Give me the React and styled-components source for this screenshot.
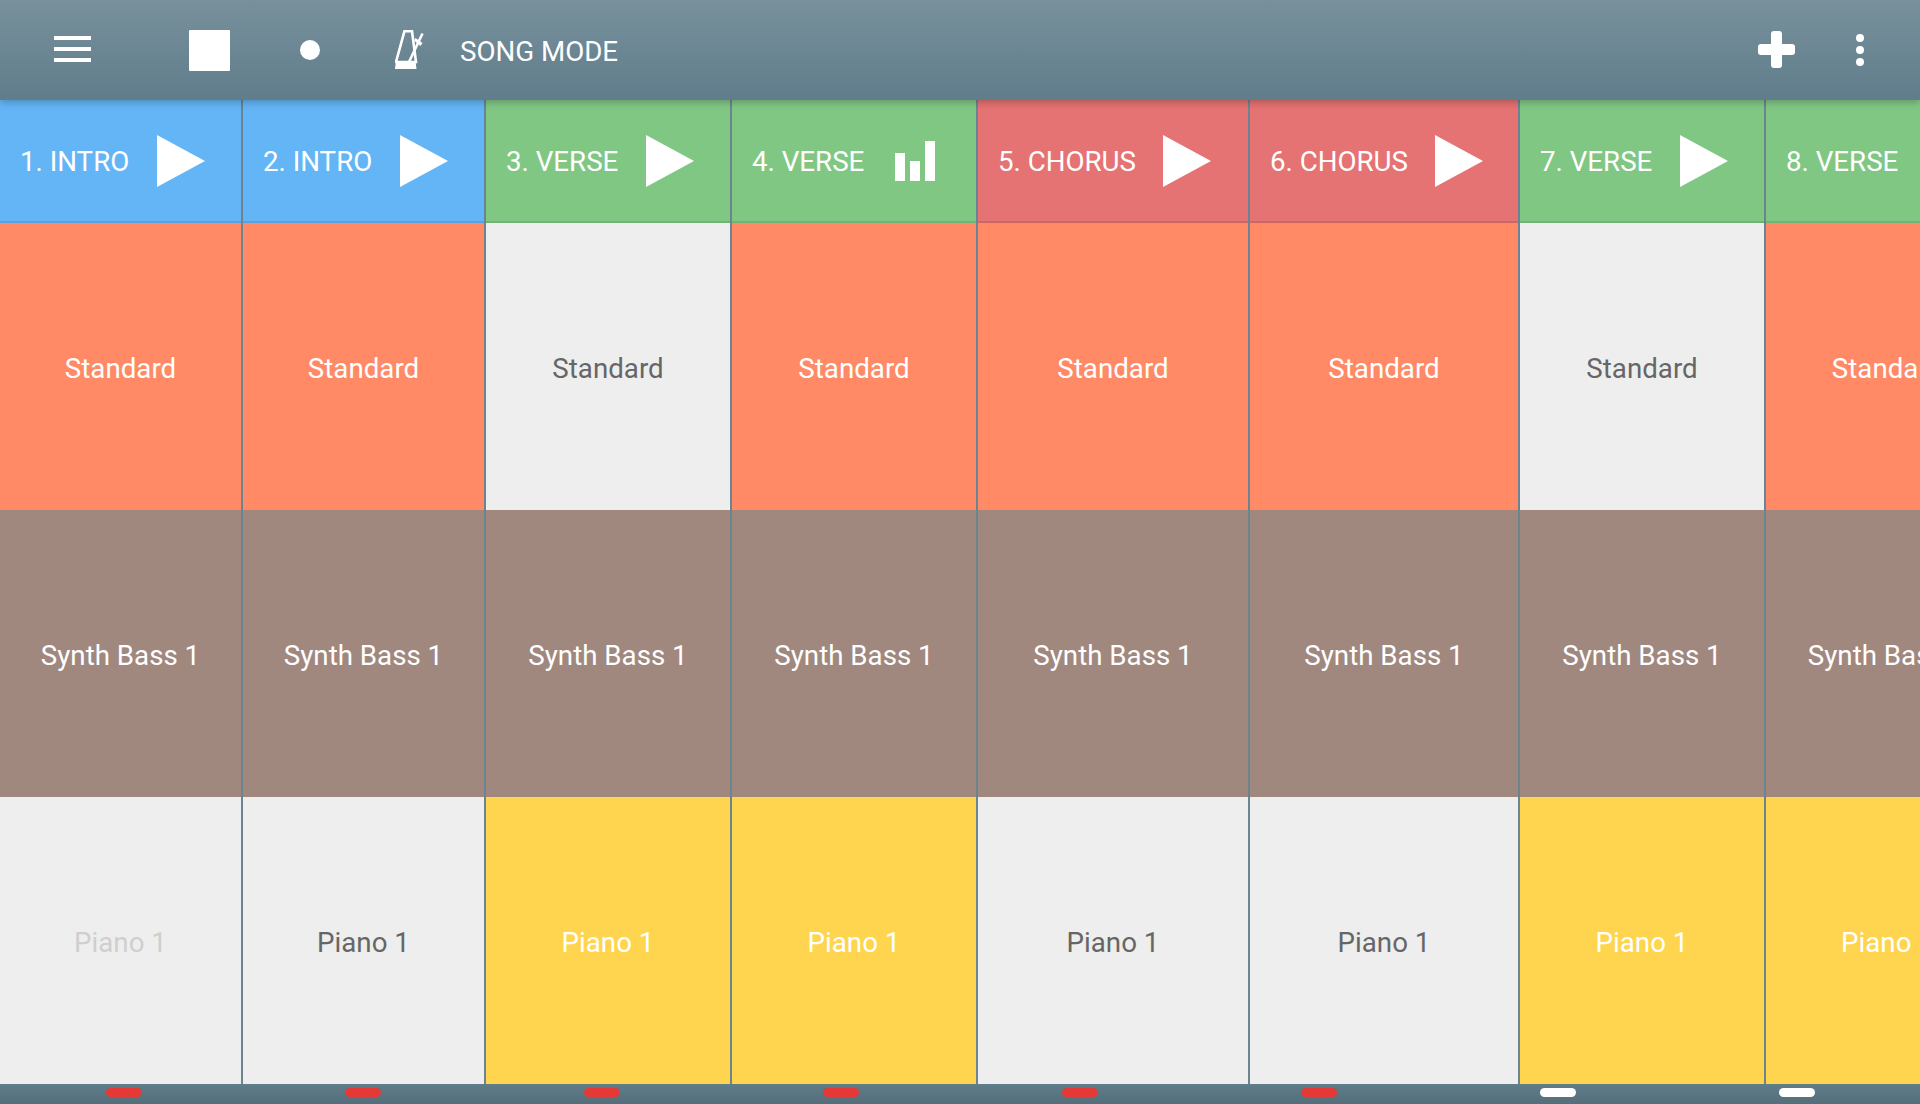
import styled, { createGlobalStyle } from 'styled-components';

const GlobalStyle = createGlobalStyle`
  html, body {
    margin: 0;
    padding: 0;
    background: #607d8b;
  }
`;

const colors = {
  blue: '#64b5f6',
  green: '#81c784',
  red: '#e57373',
  orange: '#ff8a65',
  brown: '#a1887f',
  yellow: '#ffd54f',
  off: '#eeeeee',
};

const Page = styled.div`
  width: 1920px;
  height: 1104px;
  display: flex;
  flex-direction: column;
  overflow: hidden;
  font-family: Roboto, 'Liberation Sans', sans-serif;
`;

const TopBar = styled.header`
  position: relative;
  z-index: 2;
  flex: 0 0 100px;
  display: flex;
  align-items: center;
  background: linear-gradient(#78909c, #607d8b);
  box-shadow: 0 3px 7px rgba(0, 0, 0, 0.22);
  color: #fff;
`;

const MenuIcon = styled.div`
  width: 37px;
  height: 26px;
  margin: 0 0 2px 54px;
  display: flex;
  flex-direction: column;
  justify-content: space-between;

  span {
    height: 4px;
    background: #fff;
  }
`;

const StopIcon = styled.div`
  width: 41px;
  height: 41px;
  margin-left: 98px;
  border-radius: 1px;
  background: #fff;
`;

const RecordIcon = styled.div`
  width: 20px;
  height: 20px;
  margin-left: 70px;
  border-radius: 50%;
  background: #fff;
`;

const MetronomeIcon = styled.svg`
  width: 30px;
  height: 40px;
  margin-left: 75px;
`;

const ModeLabel = styled.div`
  margin-left: 35px;
  margin-top: 3px;
  font-size: 27.7px;
  white-space: nowrap;
`;

const Spacer = styled.div`
  flex: 1;
`;

const PlusIcon = styled.svg`
  width: 37px;
  height: 37px;
  margin: 0 61px 1px 0;
`;

const DotsIcon = styled.div`
  display: flex;
  flex-direction: column;
  gap: 4px;
  margin-right: 56px;

  span {
    width: 8px;
    height: 8px;
    border-radius: 50%;
    background: #fff;
  }
`;

const Board = styled.main`
  flex: 1;
  display: flex;
  min-height: 0;
`;

const Column = styled.section`
  flex: 0 0 ${(p) => p.$width}px;
  box-sizing: border-box;
  display: flex;
  flex-direction: column;
  border-right: 2px solid #6b8492;
`;

const Tab = styled.div`
  flex: 0 0 123px;
  box-sizing: border-box;
  display: flex;
  align-items: center;
  gap: ${(p) => p.$gap}px;
  padding: 1px 0 0 20px;
  background: ${(p) => colors[p.$color]};
  border-bottom: 2px solid rgba(0, 0, 0, 0.1);
  color: #fff;
  font-size: 27.7px;
  white-space: nowrap;
`;

const PlayIcon = styled.svg`
  flex: none;
  width: 48px;
  height: 52px;
`;

const LevelIcon = styled.div`
  flex: none;
  height: 40px;
  display: flex;
  align-items: flex-end;
  gap: 5px;
`;

const LevelBar = styled.span`
  width: 10px;
  height: ${(p) => p.$height}px;
  background: #fff;
`;

const Cell = styled.div`
  flex: 1;
  display: flex;
  align-items: center;
  justify-content: center;
  padding-top: 4px;
  box-sizing: border-box;
  background: ${(p) => colors[p.$color]};
  color: ${(p) => (p.$dim ? '#cfcfcf' : p.$color === 'off' ? '#666666' : '#ffffff')};
  font-size: 27.7px;
  white-space: nowrap;
`;

const BottomBar = styled.footer`
  flex: 0 0 20px;
  box-sizing: border-box;
  display: flex;
  gap: 203px;
  padding: 4px 0 0 106px;
  background: linear-gradient(#607d8b, #546e7a);
`;

const Marker = styled.span`
  flex: none;
  width: 36px;
  height: 9px;
  border-radius: 5px;
  background: ${(p) => (p.$on ? '#ffffff' : '#e53935')};
`;

const columns = [
  { width: 243, name: '1. INTRO', color: 'blue', gap: 28, drums: 'orange', bass: 'brown', piano: 'off', dim: true },
  { width: 243, name: '2. INTRO', color: 'blue', gap: 28, drums: 'orange', bass: 'brown', piano: 'off' },
  { width: 246, name: '3. VERSE', color: 'green', gap: 28, drums: 'off', bass: 'brown', piano: 'yellow' },
  { width: 246, name: '4. VERSE', color: 'green', gap: 31, drums: 'orange', bass: 'brown', piano: 'yellow', playing: true },
  { width: 272, name: '5. CHORUS', color: 'red', gap: 27, drums: 'orange', bass: 'brown', piano: 'off' },
  { width: 270, name: '6. CHORUS', color: 'red', gap: 27, drums: 'orange', bass: 'brown', piano: 'off' },
  { width: 246, name: '7. VERSE', color: 'green', gap: 28, drums: 'off', bass: 'brown', piano: 'yellow' },
  { width: 245, name: '8. VERSE', color: 'green', gap: 28, drums: 'orange', bass: 'brown', piano: 'yellow' },
];

function Play() {
  return (
    <PlayIcon viewBox="0 0 48 52">
      <path d="M0 0 L48 26 L0 52 Z" fill="#fff" />
    </PlayIcon>
  );
}

function Level() {
  return (
    <LevelIcon>
      <LevelBar $height={28} />
      <LevelBar $height={20} />
      <LevelBar $height={40} />
    </LevelIcon>
  );
}

function App() {
  return (
    <Page>
      <GlobalStyle />
      <TopBar>
        <MenuIcon>
          <span />
          <span />
          <span />
        </MenuIcon>
        <StopIcon />
        <RecordIcon />
        <MetronomeIcon viewBox="0 0 30 40">
          <path d="M9.4 1.3 H17 L21 32 H1 Z" fill="none" stroke="#fff" strokeWidth="2.6" />
          <path d="M1 31 H20.5 L21.5 39 H0 Z" fill="#fff" />
          <path d="M14 32 L27.5 3.5" fill="none" stroke="#fff" strokeWidth="2.6" />
          <path d="M20.5 8 L27.5 13 L25.5 16 L19 10.5 Z" fill="#fff" />
        </MetronomeIcon>
        <ModeLabel>SONG MODE</ModeLabel>
        <Spacer />
        <PlusIcon viewBox="0 0 37 37">
          <rect x="13" y="0" width="11" height="37" rx="3" fill="#fff" />
          <rect x="0" y="13" width="37" height="11" rx="3" fill="#fff" />
        </PlusIcon>
        <DotsIcon>
          <span />
          <span />
          <span />
        </DotsIcon>
      </TopBar>
      <Board>
        {columns.map((col) => (
          <Column key={col.name} $width={col.width}>
            <Tab $color={col.color} $gap={col.gap}>
              {col.name}
              {col.playing ? <Level /> : <Play />}
            </Tab>
            <Cell $color={col.drums}>Standard</Cell>
            <Cell $color={col.bass}>Synth Bass 1</Cell>
            <Cell $color={col.piano} $dim={col.dim}>Piano 1</Cell>
          </Column>
        ))}
      </Board>
      <BottomBar>
        {columns.map((col, i) => (
          <Marker key={col.name} $on={i > 5} />
        ))}
      </BottomBar>
    </Page>
  );
}

export default App;
